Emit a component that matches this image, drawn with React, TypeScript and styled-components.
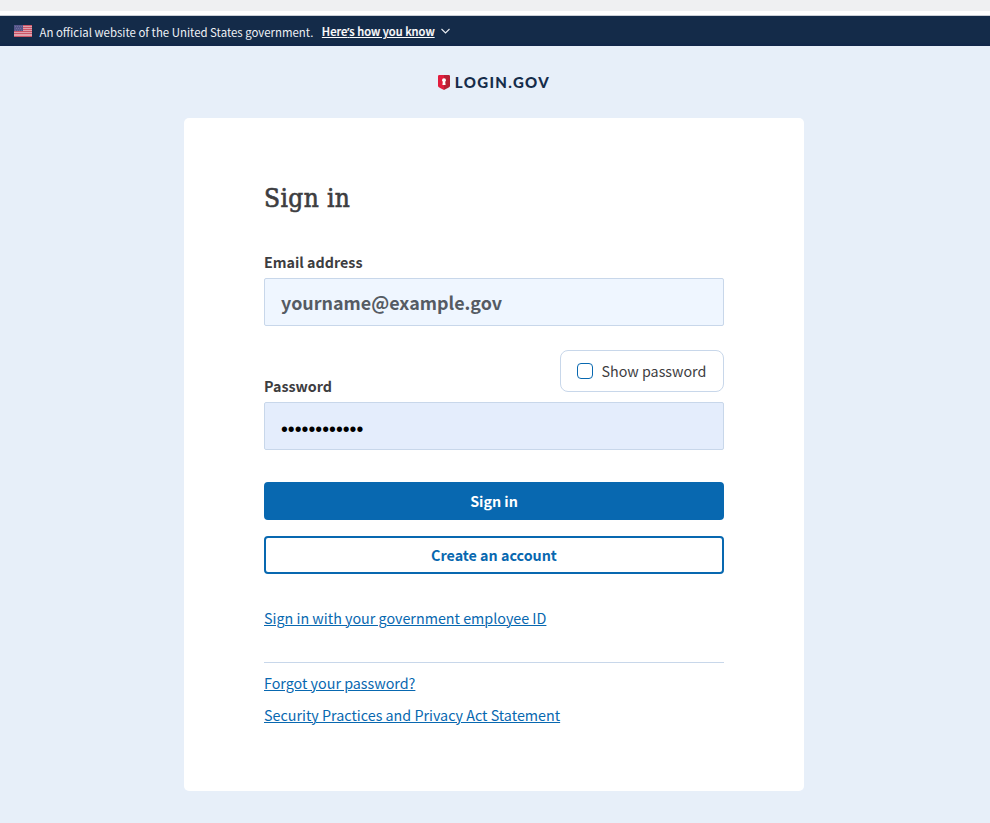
import React from "react";
import styled, { createGlobalStyle } from "styled-components";

const sans = `"Noto Sans CJK SC", "Noto Sans", sans-serif`;
const blue = "#0868b0";
const line = "#c8d7ea";

const GlobalStyle = createGlobalStyle`
  * { box-sizing: border-box; }
  body {
    margin: 0;
    background: #e7eff9;
    color: #3d3d3f;
    font-family: ${sans};
    -webkit-font-smoothing: antialiased;
  }
`;

const Page = styled.div`
  display: flex;
  flex-direction: column;
  height: 823px;
  overflow: hidden;
`;

const TopStrip = styled.div`
  height: 15px;
  flex: none;
  background: #eff0f2;
  border-bottom: 4px solid #fff;
`;

const Banner = styled.header`
  display: flex;
  align-items: center;
  height: 31px;
  flex: none;
  padding: 0 14px;
  border-top: 1px solid #ccd0d7;
  background: linear-gradient(#142b49 85%, #11264a);
  color: #eef1f5;
  font-size: 11.42px;
  line-height: 16px;
  white-space: nowrap;
`;

const BannerText = styled.span`
  margin-left: 7.5px;
  padding-top: 1px;
`;

const BannerToggle = styled.a`
  margin: 0 6px 0 8.5px;
  padding-top: 1px;
  color: #fff;
  font-size: 11.2px;
  font-weight: 500;
  text-decoration: underline;
  text-underline-offset: 1px;
  -webkit-text-stroke: 0.2px #fff;
`;

const Apostrophe = styled.span`
  font-family: "Noto Sans", sans-serif;
`;

const Brand = styled.div`
  display: flex;
  justify-content: center;
  align-items: center;
  gap: 5px;
  height: 72px;
  flex: none;
  padding-right: 2px;
`;

const BrandName = styled.span`
  font: 900 15px/18px Lato, sans-serif;
  letter-spacing: 1.35px;
  color: #152c4a;
`;

const Card = styled.main`
  width: 620px;
  height: 673px;
  flex: none;
  margin-left: 184px;
  padding: 60px 80px 0;
  border-radius: 5px;
  background: #fff;
`;

const Title = styled.h1`
  margin: 0 0 32px;
  height: 40px;
  font: 400 26px/40px "DejaVu Serif Condensed", "DejaVu Serif", serif;
  letter-spacing: 0.4px;
  -webkit-text-stroke: 0.6px #3d3d3f;
`;

const Label = styled.label`
  display: block;
  height: 28px;
  font-size: 14.3px;
  font-weight: 700;
  line-height: 24px;
`;

const Input = styled.input<{ $filled?: boolean }>`
  display: block;
  width: 460px;
  height: 48px;
  padding: ${(p) => (p.$filled ? 7 : 0)}px 16px 0;
  border: 1px solid ${line};
  border-radius: 2px;
  outline: none;
  background: ${(p) => (p.$filled ? "#e4edfc" : "#eff6ff")};
  color: #000;
  font: ${(p) => (p.$filled ? `400 19.6px "Liberation Sans", sans-serif` : `700 17.9px ${sans}`)};
  &::placeholder {
    color: #555b63;
    opacity: 1;
  }
`;

const PasswordHead = styled.div`
  display: flex;
  justify-content: space-between;
  align-items: flex-end;
  height: 42px;
  margin: 24px 0 10px;
`;

const PasswordLabel = styled(Label)`
  margin-bottom: -10px;
`;

const ShowPassword = styled.label`
  display: flex;
  align-items: center;
  gap: 8.5px;
  width: 164px;
  height: 42px;
  padding-left: 16px;
  border: 1px solid ${line};
  border-radius: 8px;
  font-size: 14.3px;
  line-height: 20px;
  white-space: nowrap;
`;

const Checkbox = styled.input`
  appearance: none;
  width: 16px;
  height: 16px;
  margin: 0;
  border: 1px solid ${blue};
  border-radius: 4px;
`;

const Button = styled.button<{ $outline?: boolean }>`
  display: block;
  width: 460px;
  height: 38px;
  margin-top: ${(p) => (p.$outline ? 16 : 32)}px;
  padding: 0;
  border: 2px solid ${blue};
  border-radius: 4px;
  background: ${(p) => (p.$outline ? "#fff" : blue)};
  color: ${(p) => (p.$outline ? blue : "#fff")};
  font: 700 14.3px/20px ${sans};
`;

const LinkRow = styled.p<{ $top?: number }>`
  margin: ${(p) => p.$top ?? 0}px 0 0;
  height: 32px;
  font-size: 14.32px;
  line-height: 32px;
`;

const Link = styled.a`
  color: ${blue};
  text-decoration: underline;
  text-decoration-thickness: 1px;
  text-underline-offset: 1px;
`;

const Rule = styled.hr`
  height: 1px;
  margin: 28px 0 4px;
  border: 0;
  background: ${line};
`;

const Flag = () => (
  <svg width="18" height="12" viewBox="0 0 18 12">
    <rect width="18" height="12" fill="#dfa0ac" />
    {[0, 2, 4, 6, 8, 11].map((y) => (
      <rect key={y} y={y} width="18" height="1" fill="#cc5566" />
    ))}
    <rect width="9" height="6" fill="#55558a" />
    <path d="M1 1.5h7M2 3.5h6M1 5.3h7" stroke="#74769f" strokeWidth=".8" strokeDasharray="1 1" />
  </svg>
);

const Chevron = () => (
  <svg width="9" height="6" viewBox="0 0 9 6" fill="none">
    <path d="M.5 1 4.5 5 8.5 1" stroke="#e9edf2" strokeWidth="1.1" />
  </svg>
);

const Shield = () => (
  <svg width="12" height="15" viewBox="0 0 12 15">
    <path d="M1.3 0H6v15C3.7 13.8 0 12.6 0 10.8V1.3Q0 0 1.3 0Z" fill="#e21d3e" />
    <path d="M6 0h4.7Q12 0 12 1.3v9.5C12 12.6 8.3 13.8 6 15Z" fill="#b81f34" />
    <path d="M4 5.2a2 2 0 1 1 4 0q0 .9-.8 1.5L7.6 10H4.4l.4-3.3Q4 6.1 4 5.2Z" fill="#fff" />
  </svg>
);

export default function App() {
  return (
    <Page>
      <GlobalStyle />
      <TopStrip />
      <Banner>
        <Flag />
        <BannerText>An official website of the United States government.</BannerText>
        <BannerToggle>
          Here<Apostrophe>’</Apostrophe>s how you know
        </BannerToggle>
        <Chevron />
      </Banner>
      <Brand>
        <Shield />
        <BrandName>LOGIN.GOV</BrandName>
      </Brand>
      <Card>
        <Title>Sign in</Title>
        <Label htmlFor="email">Email address</Label>
        <Input id="email" type="email" placeholder="yourname@example.gov" />
        <PasswordHead>
          <PasswordLabel htmlFor="password">Password</PasswordLabel>
          <ShowPassword>
            <Checkbox type="checkbox" />
            Show password
          </ShowPassword>
        </PasswordHead>
        <Input id="password" type="password" $filled defaultValue="passwordpass" />
        <Button>Sign in</Button>
        <Button $outline>Create an account</Button>
        <LinkRow $top={28}>
          <Link>Sign in with your government employee ID</Link>
        </LinkRow>
        <Rule />
        <LinkRow>
          <Link>Forgot your password?</Link>
        </LinkRow>
        <LinkRow>
          <Link>Security Practices and Privacy Act Statement</Link>
        </LinkRow>
      </Card>
    </Page>
  );
}
